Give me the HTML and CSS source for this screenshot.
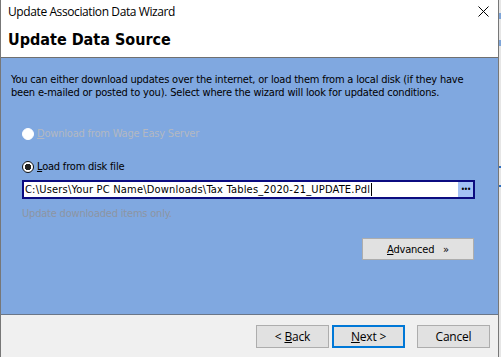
FILE: index.html
```html
<!DOCTYPE html>
<html lang="en">
<head>
    <meta charset="UTF-8">
    <meta name="viewport" content="width=device-width, initial-scale=1.0">
    <title>Update Association Data Wizard</title>
    <link rel="stylesheet" href="styles.css">
</head>
<body>
    <div class="window">
        <!-- Title bar -->
        <div class="titlebar">
            <span class="title">Update Association Data Wizard</span>
            <svg class="close" width="11" height="11" viewBox="0 0 11 11">
                <path d="M0.5 0.5 L10.5 10.5 M10.5 0.5 L0.5 10.5" stroke="#000" stroke-width="1" fill="none"/>
            </svg>
        </div>

        <!-- Page header -->
        <div class="header">
            <h1>Update Data Source</h1>
        </div>

        <!-- Wizard page -->
        <div class="content">
            <p class="intro">You can either download updates over the internet, or load them from a local disk (if they have been e-mailed or posted to you). Select where the wizard will look for updated conditions.</p>

            <label class="radio disabled">
                <span class="radio-dot"></span>
                <span><u>D</u>ownload from Wage Easy Server</span>
            </label>

            <label class="radio checked">
                <span class="radio-dot"></span>
                <span><u>L</u>oad from disk file</span>
            </label>

            <div class="file-input">
                <span class="file-path">C:\Users\Your PC Name\Downloads\Tax Tables_2020-21_UPDATE.Pdl<span class="caret"></span></span>
                <span class="browse">&bull;&bull;&bull;</span>
            </div>

            <div class="note">Update downloaded items only.</div>

            <div class="advanced-row">
                <button class="btn advanced"><u>A</u>dvanced&nbsp;&nbsp;&nbsp;&raquo;</button>
            </div>
        </div>

        <!-- Buttons -->
        <div class="footer">
            <button class="btn">&lt; <u>B</u>ack</button>
            <button class="btn default"><u>N</u>ext &gt;</button>
            <button class="btn cancel">Cancel</button>
        </div>
    </div>

    <div class="desktop">
        <div class="desk-mark top1"></div>
        <div class="desk-mark top2"></div>
        <div class="desk-mark mid1"></div>
        <div class="desk-mark mid2"></div>
    </div>
</body>
</html>
```

FILE: styles.css
```css
body {
    margin: 0;
    padding: 0;
    display: flex;
    width: 501px;
    height: 357px;
    overflow: hidden;
    background-color: #e6e6e6;
    font-family: "DejaVu Sans Condensed", "DejaVu Sans", sans-serif;
}
.window {
    width: 497px;
    height: 357px;
    overflow: hidden;
    border-left: 1px solid #777;
    border-right: 1px solid #777;
    background: #fff;
    flex-shrink: 0;
}
.titlebar {
    height: 22px;
    display: flex;
    align-items: center;
    justify-content: space-between;
    padding: 0 9px 0 7px;
}
.title {
    font-family: "Open Sans", "Noto Sans", sans-serif;
    font-size: 12px;
    color: #000;
    letter-spacing: -0.4px;
}
.close {
    margin-top: 1px;
}
.header {
    height: 35px;
    padding-left: 7px;
    border-bottom: 1px solid #707070;
}
.header h1 {
    margin: 0;
    padding-top: 8px;
    font-size: 16px;
    font-weight: bold;
    color: #000;
}
.content {
    height: 257px;
    background-color: #80a8e0;
    border-bottom: 1px solid #6a7688;
    font-size: 11px;
    color: #000;
    padding: 0 10px;
    box-sizing: border-box;
    letter-spacing: -0.2px;
}
.intro {
    margin: 0;
    padding-top: 15px;
    line-height: 13px;
}
.radio {
    display: flex;
    align-items: center;
    gap: 3px;
    margin-left: 11px;
    height: 13px;
}
.radio.disabled {
    margin-top: 28px;
    color: #b3b8c2;
}
.radio.checked {
    margin-top: 20px;
}
.radio-dot {
    width: 10px;
    height: 10px;
    border-radius: 50%;
    background: #fff;
    border: 1px solid #fff;
    box-sizing: content-box;
}
.radio.checked .radio-dot {
    background: radial-gradient(circle, #222 0 3px, #fff 3.5px);
    border-color: #111;
}
.file-input {
    margin: 7px 13px 0 11px;
    height: 15px;
    border: 2px solid #0b0b80;
    background: #fff;
    display: flex;
    align-items: center;
    justify-content: space-between;
    padding-left: 1px;
}
.file-path {
    font-size: 11px;
    letter-spacing: 0.2px;
    display: flex;
    align-items: center;
}
.caret {
    display: inline-block;
    width: 1px;
    height: 13px;
    background: #000;
    margin-left: 1px;
}
.browse {
    width: 15px;
    height: 15px;
    background: #a3c1f5;
    font-size: 8px;
    line-height: 15px;
    text-align: center;
    letter-spacing: -1px;
}
.note {
    margin: 8px 0 0 11px;
    color: #8d95a3;
}
.advanced-row {
    display: flex;
    justify-content: flex-end;
    margin: 18px 14px 0 0;
}
.btn {
    width: 73px;
    height: 23px;
    background-color: #e1e1e1;
    border: 1px solid #adadad;
    font-family: "Open Sans", "Noto Sans", sans-serif;
    font-size: 12px;
    color: #000;
    padding: 0;
    letter-spacing: -0.2px;
}
.btn.advanced {
    width: 112px;
    height: 22px;
    font-family: "DejaVu Sans Condensed", "DejaVu Sans", sans-serif;
    font-size: 11px;
    letter-spacing: -0.2px;
}
.btn.default {
    border: 2px solid #0078d7;
}
.footer {
    height: 64px;
    background-color: #f0f0f0;
    display: flex;
    justify-content: flex-end;
    align-items: flex-start;
    gap: 3px;
    padding: 10px 8px 0 0;
    box-sizing: border-box;
}
.btn.cancel {
    margin-left: 9px;
}
.desktop {
    flex: 1;
    position: relative;
}
.desk-mark {
    position: absolute;
    left: 0;
    width: 2px;
    height: 6px;
    background: #7fa5d8;
}
.top1 { top: 13px; }
.top2 { top: 40px; }
.mid1 { top: 166px; height: 2px; background: #2f6fc0; }
.mid2 { top: 185px; height: 2px; background: #2f6fc0; }
```
